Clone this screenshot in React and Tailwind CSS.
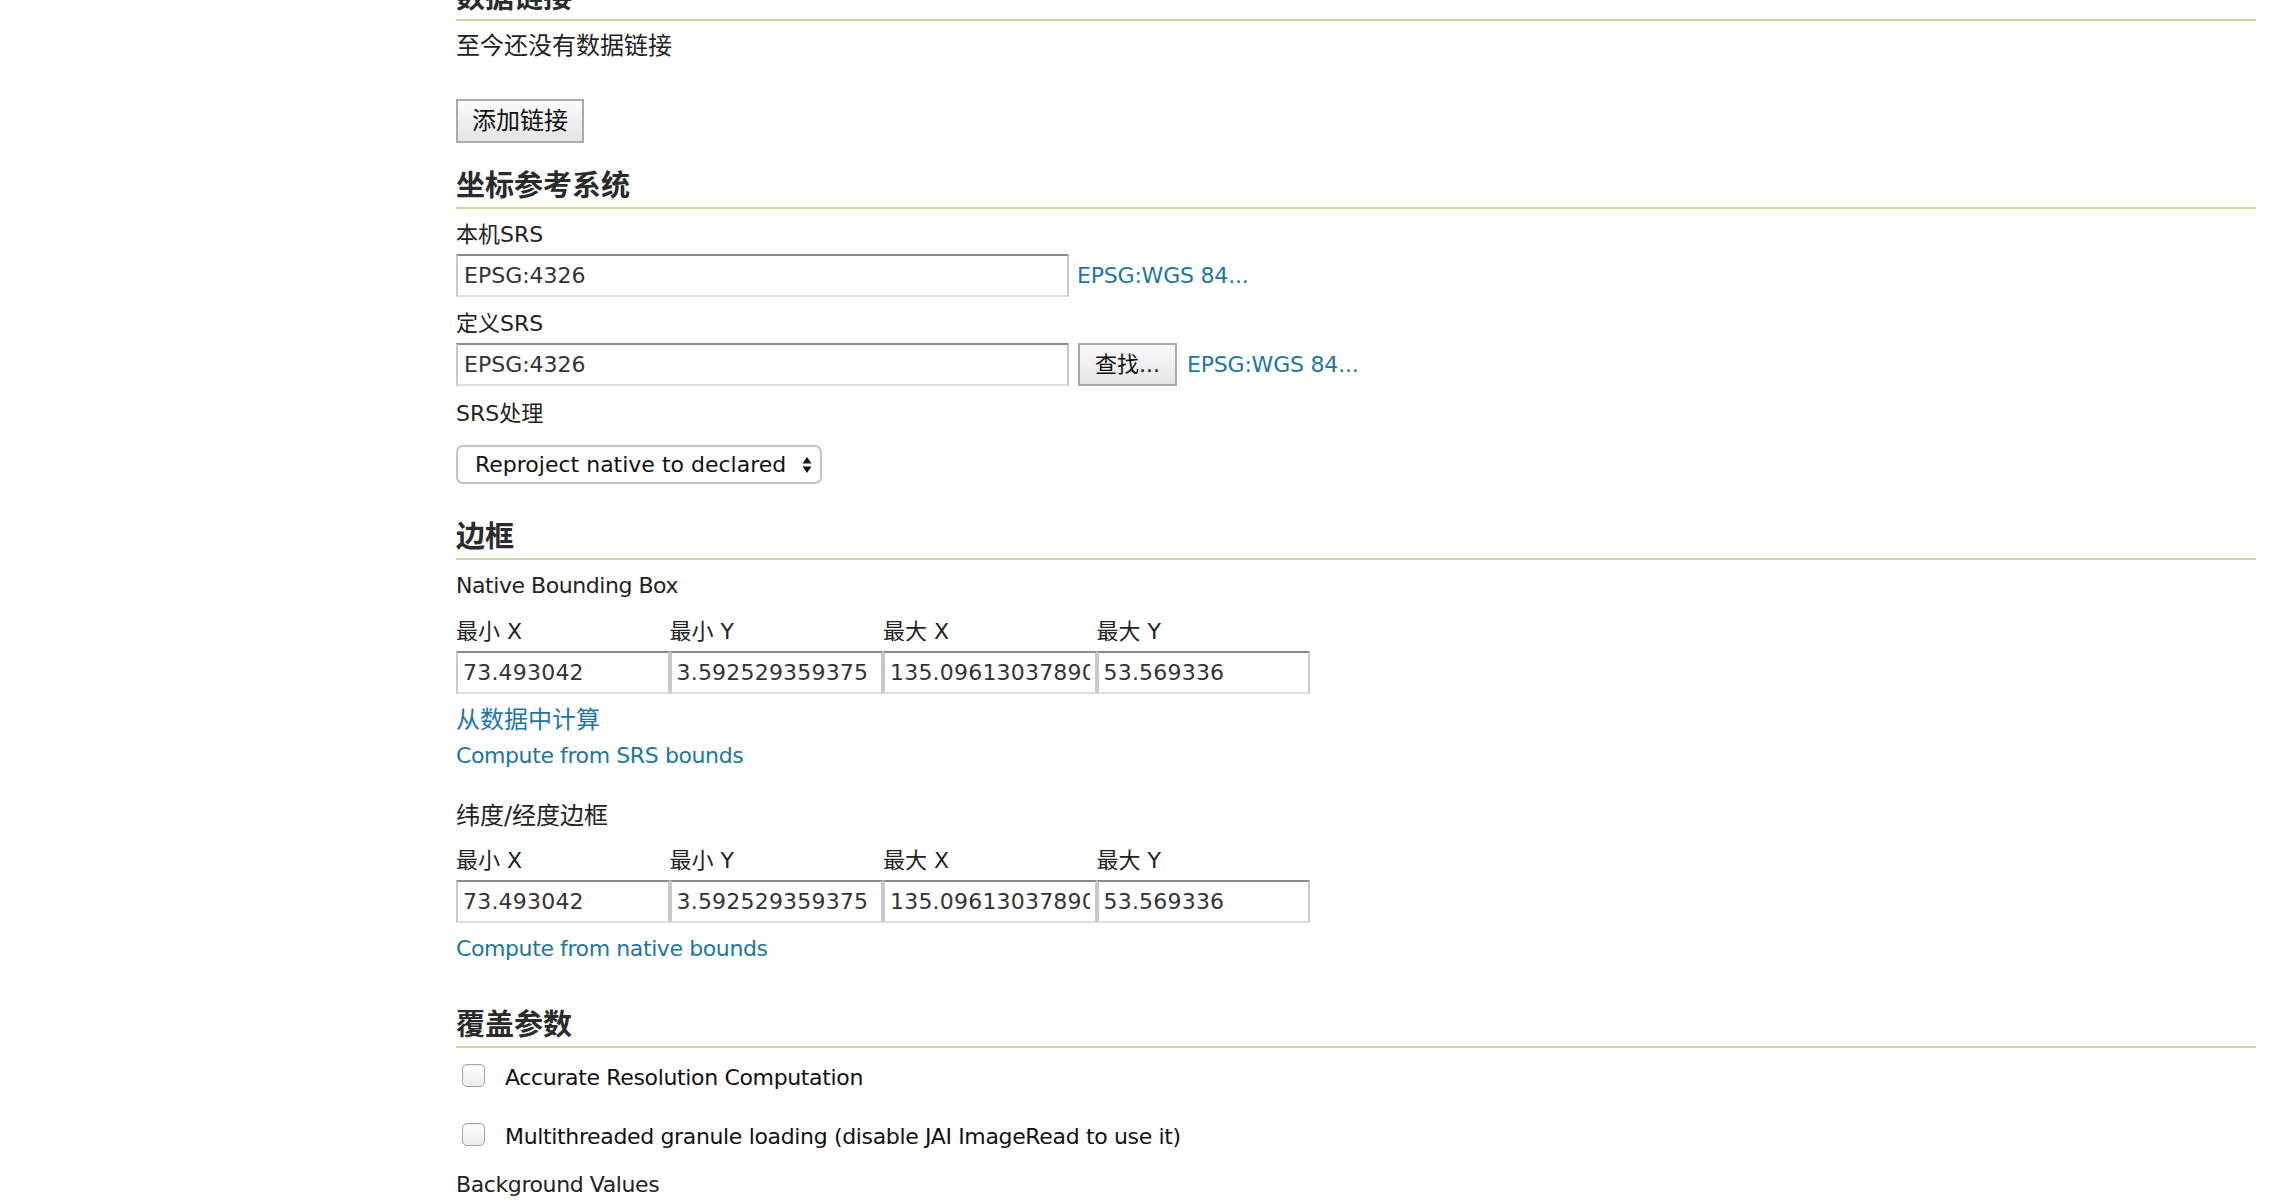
import React from "react";

const FONT = "font-['DejaVu_Sans','Noto_Sans_CJK_SC',sans-serif]";

function Heading({ children, className }) {
  return (
    <h2
      className={
        "text-[29px] leading-[34px] font-bold text-[#2b2b2b] pb-[4px] border-b-2 border-[#c5dd9b] " +
        className
      }
    >
      {children}
    </h2>
  );
}

function Label({ children, className }) {
  return (
    <div className={"leading-[30px] text-[#222] " + className}>
      {children}
    </div>
  );
}

function LinkText({ children, className }) {
  return (
    <a
      href="#"
      className={"block w-fit leading-[30px] text-[#1d76a2] no-underline " + className}
    >
      {children}
    </a>
  );
}

function TextInput({ value, className }) {
  return (
    <input
      readOnly
      value={value}
      className={
        "h-[43px] border-2 border-t-[#8a8a8a] border-x-[#c8c8c8] border-b-[#dedede] bg-white text-[22px] text-[#333] outline-none " +
        className
      }
    />
  );
}

function BBox({ className }) {
  const labels = ["最小 X", "最小 Y", "最大 X", "最大 Y"];
  const values = ["73.493042", "3.592529359375", "135.09613037890625", "53.569336"];
  return (
    <div className={"w-[854px] " + className}>
      <div className="grid grid-cols-4">
        {labels.map((l) => (
          <div key={l} className="text-[22px] leading-[30px] text-[#222]">
            {l}
          </div>
        ))}
      </div>
      <div className="grid grid-cols-4 mt-[4px]">
        {values.map((v) => (
          <TextInput key={v} value={v} className="w-full px-[5px] tracking-[0.2px]" />
        ))}
      </div>
    </div>
  );
}

function Checkbox() {
  return (
    <span className="block w-[23px] h-[23px] rounded-[5px] border border-[#a3a3a3] bg-gradient-to-b from-white to-[#ececec] shadow-[inset_0_1px_1px_rgba(0,0,0,0.08)]" />
  );
}

export default function App() {
  return (
    <div className={"w-[2270px] h-[1200px] overflow-hidden bg-white " + FONT}>
      <div className="ml-[456px] w-[1800px]">
        {/* 数据链接 */}
        <Heading className="mt-[-19px]">数据链接</Heading>
        <Label className="mt-[10px] text-[24px] text-[#111]">至今还没有数据链接</Label>
        <button className="mt-[38px] h-[44px] w-[128px] border-2 border-[#aaaaaa] bg-gradient-to-b from-[#fbfbfb] to-[#e4e4e4] text-[24px] text-[#111] leading-none">
          添加链接
        </button>

        {/* 坐标参考系统 */}
        <Heading className="mt-[26px]">坐标参考系统</Heading>
        <Label className="mt-[11px] text-[22px]">本机SRS</Label>
        <div className="mt-[4px] flex items-center">
          <TextInput value="EPSG:4326" className="w-[613px] px-[6px]" />
          <a href="#" className="ml-[8px] text-[22px] tracking-[-0.2px] text-[#1d76a2]">
            EPSG:WGS 84...
          </a>
        </div>
        <Label className="mt-[12px] text-[22px]">定义SRS</Label>
        <div className="mt-[4px] flex items-center">
          <TextInput value="EPSG:4326" className="w-[613px] px-[6px]" />
          <button className="ml-[9px] h-[43px] w-[99px] border-2 border-[#aaaaaa] bg-gradient-to-b from-[#fbfbfb] to-[#e4e4e4] text-[22px] text-[#111] leading-none">
            查找...
          </button>
          <a href="#" className="ml-[10px] text-[22px] tracking-[-0.2px] text-[#1d76a2]">
            EPSG:WGS 84...
          </a>
        </div>
        <Label className="mt-[13px] text-[22px]">SRS处理</Label>
        <div className="mt-[16px] h-[39px] w-[366px] rounded-[7px] border-2 border-[#c2c2c2] bg-white flex items-center pl-[17px] pr-[8px] text-[22px] text-[#111]">
          <span className="flex-1 whitespace-nowrap">Reproject native to declared</span>
          <svg width="10" height="18" viewBox="0 0 10 18" className="shrink-0">
            <path d="M5 1 L9.5 7.5 L0.5 7.5 Z" fill="#111" />
            <path d="M5 17 L9.5 10.5 L0.5 10.5 Z" fill="#111" />
          </svg>
        </div>

        {/* 边框 */}
        <Heading className="mt-[36px]">边框</Heading>
        <Label className="mt-[11px] text-[22px] tracking-[-0.45px]">Native Bounding Box</Label>
        <BBox className="mt-[16px]" />
        <LinkText className="mt-[11px] text-[24px]">从数据中计算</LinkText>
        <LinkText className="mt-[6px] text-[22px] tracking-[-0.4px]">Compute from SRS bounds</LinkText>
        <Label className="mt-[30px] text-[24px]">纬度/经度边框</Label>
        <BBox className="mt-[15px]" />
        <LinkText className="mt-[11px] text-[22px] tracking-[-0.4px]">Compute from native bounds</LinkText>

        {/* 覆盖参数 */}
        <Heading className="mt-[44px]">覆盖参数</Heading>
        <div className="mt-[15px] h-[30px] flex items-center">
          <span className="ml-[6px] -mt-[6px]">
            <Checkbox />
          </span>
          <span className="ml-[20px] text-[22px] tracking-[-0.35px] leading-[30px] text-[#111]">
            Accurate Resolution Computation
          </span>
        </div>
        <div className="mt-[29px] h-[30px] flex items-center">
          <span className="ml-[6px] -mt-[6px]">
            <Checkbox />
          </span>
          <span className="ml-[20px] text-[22px] tracking-[-0.35px] leading-[30px] text-[#111]">
            Multithreaded granule loading (disable JAI ImageRead to use it)
          </span>
        </div>
        <Label className="mt-[18px] text-[22px] tracking-[-0.4px]">Background Values</Label>
      </div>
    </div>
  );
}
